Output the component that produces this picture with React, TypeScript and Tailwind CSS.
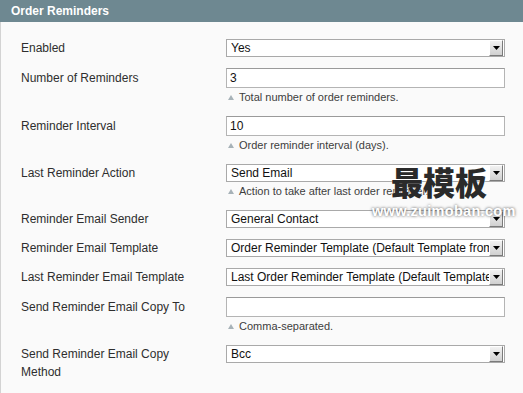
import React from "react";

type Row = {
    label: string;
    kind: "select" | "input";
    value: string;
    note?: string;
};

const rows: Row[] = [
    { label: "Enabled", kind: "select", value: "Yes" },
    { label: "Number of Reminders", kind: "input", value: "3", note: "Total number of order reminders." },
    { label: "Reminder Interval", kind: "input", value: "10", note: "Order reminder interval (days)." },
    { label: "Last Reminder Action", kind: "select", value: "Send Email", note: "Action to take after last order reminder." },
    { label: "Reminder Email Sender", kind: "select", value: "General Contact" },
    { label: "Reminder Email Template", kind: "select", value: "Order Reminder Template (Default Template from Locale)" },
    { label: "Last Reminder Email Template", kind: "select", value: "Last Order Reminder Template (Default Template from Locale)" },
    { label: "Send Reminder Email Copy To", kind: "input", value: "", note: "Comma-separated." },
    { label: "Send Reminder Email Copy Method", kind: "select", value: "Bcc" },
];

function FakeSelect({ value }: { value: string }) {
    return (
        <div className="relative flex h-[18px] w-[279px] items-center border border-[#a9a9a9] bg-white pl-[4px] text-[12px] text-[#111]">
            <span className="block w-[260px] overflow-hidden whitespace-nowrap leading-[16px]">{value}</span>
            {/* dropdown button */}
            <div className="absolute right-[1px] top-[0px] flex h-[16px] w-[14px] items-center justify-center border-t border-l border-t-white border-l-white border-r border-b border-r-[#7a7a7a] border-b-[#7a7a7a] bg-gradient-to-b from-[#f2f2f2] to-[#d0d0d0]">
                <svg width="7" height="4" viewBox="0 0 7 4">
                    <polygon points="0,0 7,0 3.5,4" fill="#000" />
                </svg>
            </div>
        </div>
    );
}

function FakeInput({ value }: { value: string }) {
    return (
        <div className="flex h-[20px] w-[279px] items-center border border-[#b4b4b4] border-t-[#9a9a9a] bg-white pl-[3px] text-[12px] text-[#111]">
            {value}
        </div>
    );
}

function Note({ text }: { text: string }) {
    return (
        <div className="mt-[2px] flex items-center gap-[5px] pl-[2px] text-[11px] leading-[15px] text-[#3d3d3d]">
            <svg width="6" height="5" viewBox="0 0 6 5">
                <polygon points="3,0 6,5 0,5" fill="#a7b2b8" />
            </svg>
            <span>{text}</span>
        </div>
    );
}

export default function App() {
    return (
        <div className="relative min-h-screen w-full overflow-hidden bg-[#fafafa] font-['Liberation_Sans',Arial,sans-serif]">
            {/* header */}
            <div className="flex h-[22px] items-center bg-[#6e8891] pl-[11px] text-[12px] font-bold text-white">
                Order Reminders
            </div>

            {/* fieldset */}
            <div className="flex min-h-[371px] flex-col gap-[11px] border-l border-[#d3d3d3] pl-[20px] pt-[17px]">
                {rows.map((r) => (
                    <div key={r.label} className="flex items-start">
                        <div
                            className={
                                r.kind === "input"
                                    ? "w-[205px] pr-[20px] pt-[1px] text-[12px] leading-[18px] text-[#2e2e2e]"
                                    : "w-[205px] pr-[20px] text-[12px] leading-[18px] text-[#2e2e2e]"
                            }
                        >
                            {r.label}
                        </div>
                        <div className="flex flex-col">
                            {r.kind === "select" ? <FakeSelect value={r.value} /> : <FakeInput value={r.value} />}
                            {r.note && <Note text={r.note} />}
                        </div>
                    </div>
                ))}
            </div>

            {/* watermark */}
            <div className="absolute left-[391px] top-[165px] text-[32px] font-black leading-none text-[#2a2a2a] [text-shadow:0_0_2px_#fff] font-['Noto_Sans_CJK_SC',sans-serif]">
                最模板
            </div>
            <div className="absolute left-[372px] top-[204px] text-[14.5px] font-bold leading-none tracking-[0.3px] text-white [text-shadow:0_0_3px_#444]">
                www.zuimoban.com
            </div>
        </div>
    );
}
